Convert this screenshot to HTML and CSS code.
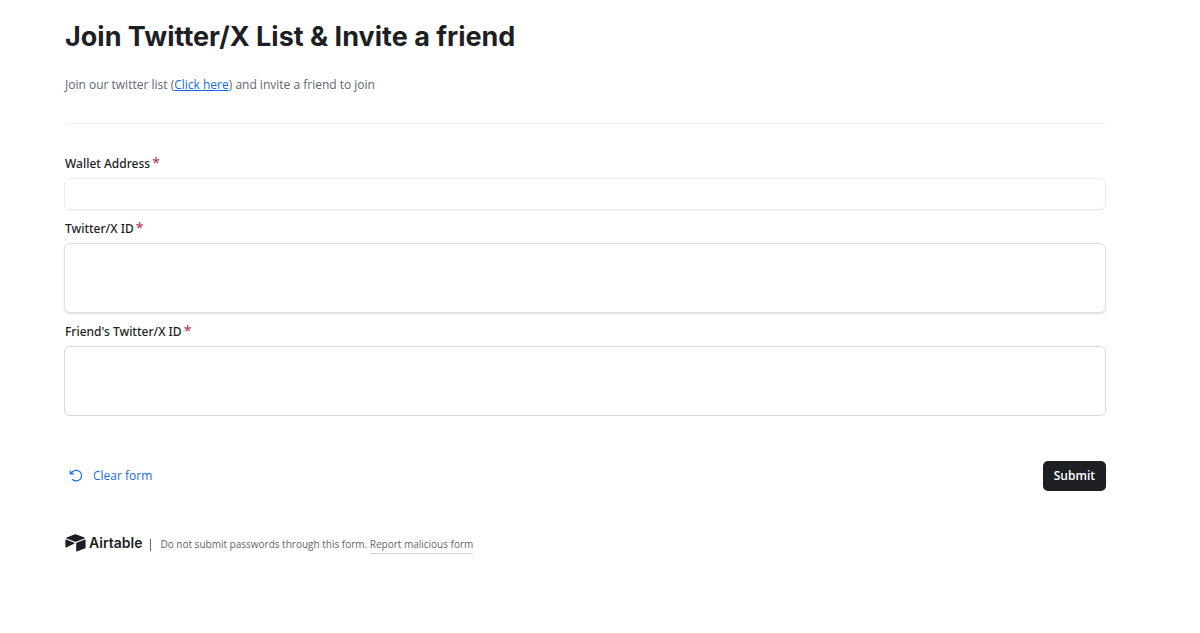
FILE: index.html
```html
<!DOCTYPE html>
<html lang="en">
<head>
  <meta charset="UTF-8">
  <meta name="viewport" content="width=device-width, initial-scale=1.0">
  <title>Join Twitter/X List &amp; Invite a friend</title>
  <link rel="stylesheet" href="styles.css">
</head>
<body>
  <main class="page">
    <header class="form-header">
      <h1>Join Twitter/X List &amp; Invite a friend</h1>
      <p class="description">Join our twitter list (<a href="#">Click here</a>) and invite a friend to join</p>
    </header>

    <form>
      <div class="field">
        <label for="wallet">Wallet Address<span class="required">*</span></label>
        <input class="control light" type="text" id="wallet" required>
      </div>
      <div class="field">
        <label for="twitter">Twitter/X ID<span class="required">*</span></label>
        <textarea class="control raised" id="twitter" required></textarea>
      </div>
      <div class="field">
        <label for="friend">Friend's Twitter/X ID<span class="required">*</span></label>
        <textarea class="control" id="friend" required></textarea>
      </div>

      <div class="actions">
        <button type="reset" class="clear">
          <svg width="14" height="14" viewBox="0 0 14 14" fill="none" stroke="currentColor" stroke-width="1.2" stroke-linecap="round" stroke-linejoin="round">
            <path d="M1.3 1.9v3h3"/>
            <path d="M1.5 4.7 3.6 2.8a5.3 5.3 0 1 1 0 7.7"/>
          </svg>
          Clear form
        </button>
        <button type="submit" class="submit">Submit</button>
      </div>
    </form>

    <footer class="form-footer">
      <a href="#" class="brand">
        <svg width="21" height="18" viewBox="0 0 21 18" fill="currentColor">
          <path d="M9.4.4 1.6 3.5c-.5.2-.5.8 0 1l7.8 3c.7.3 1.5.3 2.2 0l7.8-3c.5-.2.5-.8 0-1L11.6.4a3 3 0 0 0-2.2 0z"/>
          <path d="M11.2 9.2v7.9c0 .4.4.6.7.5l8.3-3.3a.7.7 0 0 0 .4-.6V6c0-.4-.4-.6-.7-.5l-8.3 3.2a.6.6 0 0 0-.4.5z"/>
          <path d="M9.3 9.6 6.5 11 1.2 13.5c-.4.2-.8 0-.8-.4V6c0-.4.4-.7.8-.5l8 3.2c.5.2.5.7.1.9z"/>
        </svg>
        <span>Airtable</span>
      </a>
      <span class="divider"></span>
      <p>Do not submit passwords through this form. <a href="#" class="report">Report malicious form</a></p>
    </footer>
  </main>
</body>
</html>
```

FILE: styles.css
```css
* {
  box-sizing: border-box;
}
body {
  margin: 0;
  background: #fff;
  color: #1d1f25;
  font-family: "Open Sans", sans-serif;
  font-size: 12px;
  line-height: 18px;
}
h1,
p {
  margin: 0;
}
button,
input,
textarea {
  font: inherit;
}
.page {
  padding: 18px 94px 0 64px;
}
.form-header {
  margin-left: 1px;
  padding-bottom: 29px;
  border-bottom: 1px solid #f2f2f2;
}
h1 {
  margin-bottom: 20px;
  font-family: Inter, sans-serif;
  font-size: 27px;
  font-weight: 700;
  line-height: 38px;
}
.description {
  color: #616670;
}
.description a {
  color: #166ee1;
}
form {
  padding-top: 31px;
}
.field {
  margin-bottom: 10px;
}
label {
  display: block;
  margin-bottom: 5px;
  padding-left: 1px;
  font-family: "Noto Sans", sans-serif;
  font-weight: 500;
}
.required {
  margin-left: 2px;
  color: #b5295f;
  font-size: 14px;
  font-weight: 400;
  line-height: 1;
}
.control {
  display: block;
  width: 100%;
  height: 70px;
  padding: 6px 8px;
  border: 1px solid #d9d9d9;
  border-radius: 6px;
  background: #fff;
  resize: none;
}
.light {
  height: 32px;
  border-color: #ebebeb;
  box-shadow: 0 1px 1px rgba(0, 0, 0, 0.04);
}
.raised {
  border-color: #e0e0e0;
  box-shadow: 0 1px 2px rgba(0, 0, 0, 0.14);
}
.actions {
  display: flex;
  justify-content: space-between;
  align-items: center;
  margin-top: 45px;
}
.clear {
  display: flex;
  align-items: center;
  gap: 10px;
  padding: 0 5px;
  border: 0;
  background: none;
  color: #166ee1;
}
.submit {
  padding: 6px 11px;
  border: 0;
  border-radius: 5px;
  background: #1d1f25;
  color: #fff;
  font-weight: 600;
}
.form-footer {
  display: flex;
  align-items: center;
  margin-top: 40px;
  padding-left: 1px;
  color: #616670;
  font-size: 10px;
}
.brand {
  display: flex;
  align-items: center;
  gap: 3px;
  color: #1d1f25;
  font-family: Inter, sans-serif;
  font-size: 14px;
  font-weight: 600;
  text-decoration: none;
}
.divider {
  width: 1px;
  height: 12px;
  margin: 4px 9px 0 8px;
  background: #616670;
}
.form-footer p {
  padding-top: 4px;
}
.report {
  display: inline-block;
  border-bottom: 1px solid #d0d0d0;
  color: inherit;
  text-decoration: none;
}
```
